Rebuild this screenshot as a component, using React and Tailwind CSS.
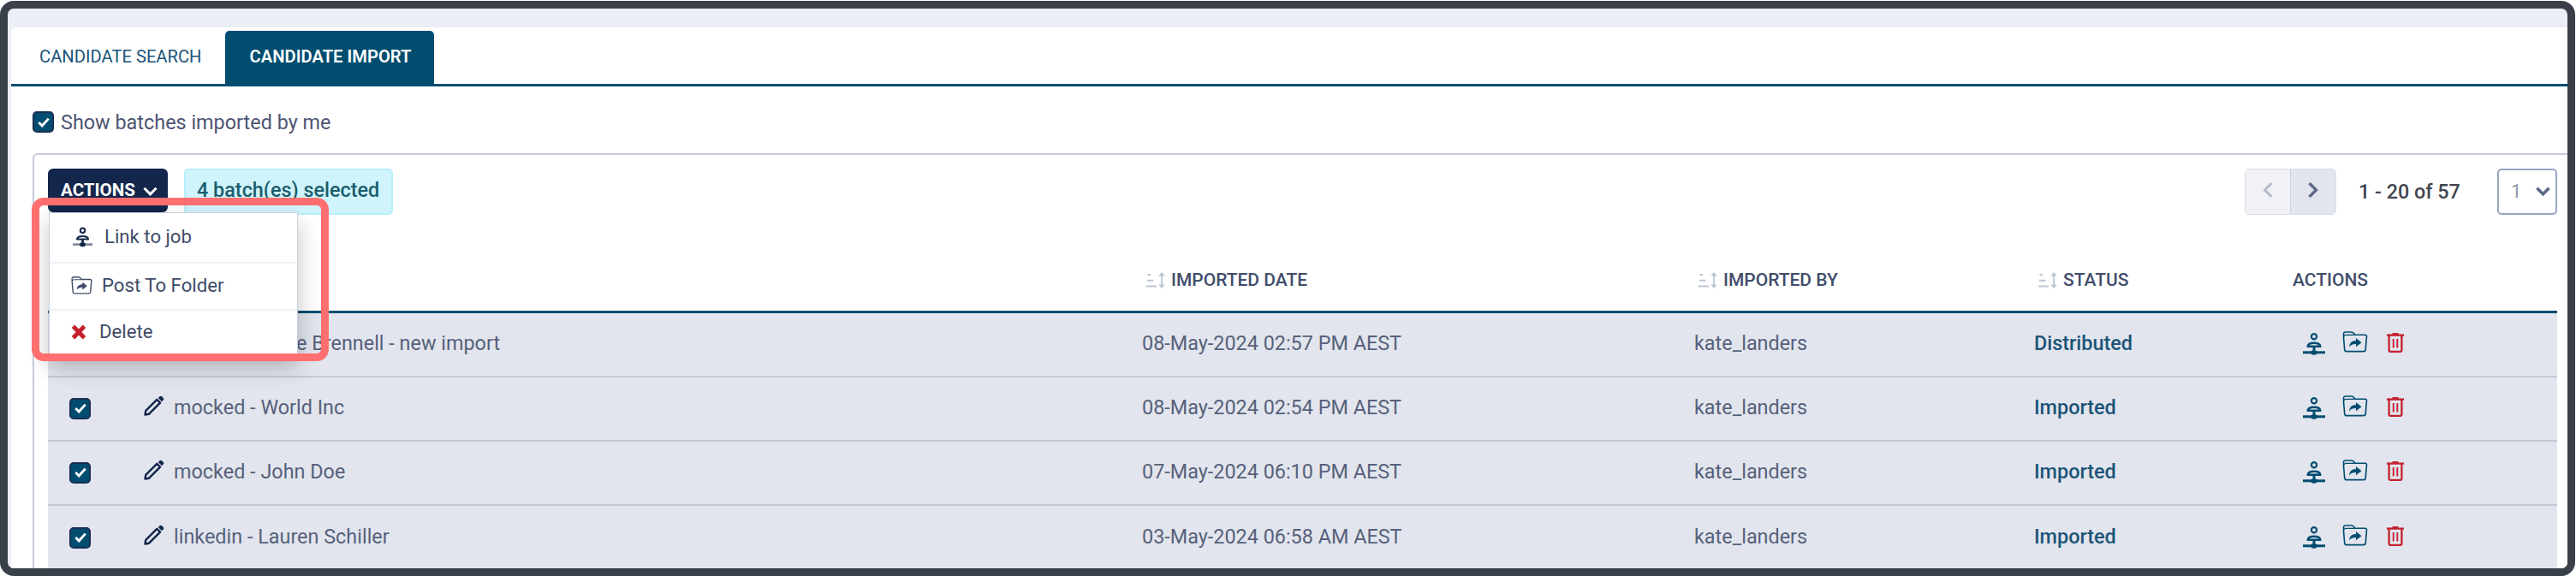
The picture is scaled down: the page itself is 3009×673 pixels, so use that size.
import clsx from "clsx";

const batches = [
  {
    name: "e Brennell - new import",
    date: "08-May-2024 02:57 PM AEST",
    user: "kate_landers",
    status: "Distributed",
    covered: true,
  },
  {
    name: "mocked - World Inc",
    date: "08-May-2024 02:54 PM AEST",
    user: "kate_landers",
    status: "Imported",
  },
  {
    name: "mocked - John Doe",
    date: "07-May-2024 06:10 PM AEST",
    user: "kate_landers",
    status: "Imported",
  },
  {
    name: "linkedin - Lauren Schiller",
    date: "03-May-2024 06:58 AM AEST",
    user: "kate_landers",
    status: "Imported",
  },
];

const columns =
  "grid grid-cols-[1278px_645px_397px_302px_minmax(0,1fr)] items-center";

/* Icons */

function LinkIcon({ className, base = "currentColor" }) {
  return (
    <svg viewBox="0 0 26 26" fill="none" className={className}>
      <circle cx="13" cy="4.2" r="3.1" stroke="currentColor" strokeWidth="2.2" />
      <path
        d="M5.6 15.8c.4-3 3-4 7.4-4s7 1 7.400 4z"
        stroke="currentColor"
        strokeWidth="2.4"
        strokeLinejoin="round"
      />
      <path d="M0 22.800h26" stroke={base} strokeWidth="3" />
      <path d="M11.500 16h3v4h-3z" fill="currentColor" />
      <ellipse cx="13" cy="22.800" rx="3.800" ry="2.900" fill="currentColor" />
    </svg>
  );
}

function FolderIcon({ className }) {
  return (
    <svg viewBox="0 0 30 26" fill="none" className={className}>
      <path
        d="M2.2 22.2 1 8V3.2C1 1.9 1.8 1 3.2 1h7.2c1.4 0 2.2.5 3 1.6l1.3 1.8H27c1.4 0 2.2.9 2 2.3l-1.3 15.6c-.1 1.5-.9 2.3-2.3 2.3H4.6c-1.4 0-2.3-.8-2.4-2.4z"
        stroke="currentColor"
        strokeWidth="1.7"
      />
      <path d="M1.2 6.2c.8-1.3 1.6-1.6 3-1.6h10.600" stroke="currentColor" strokeWidth="1.4" />
      <path
        d="M7.8 19.200c.4-5.200 3.400-7.600 8.200-7.700V8.200l6.800 5.600-6.800 5.300v-3.400c-3.600-.1-6 .9-8.200 3.500z"
        fill="currentColor"
      />
    </svg>
  );
}

function TrashIcon({ className }) {
  return (
    <svg viewBox="0 0 20 23" fill="none" className={className}>
      <path d="M6.5 1h7" stroke="currentColor" strokeWidth="2" />
      <path d="M0 2.6h20" stroke="currentColor" strokeWidth="2.4" />
      <path d="M2.6 3v17.5c0 .8.5 1.3 1.3 1.3h12.200c.8 0 1.300-.5 1.300-1.300V3" stroke="currentColor" strokeWidth="2.300" />
      <path d="M7.700 7v10.500M12.300 7v10.500" stroke="currentColor" strokeWidth="1.900" />
    </svg>
  );
}

function PencilIcon({ className }) {
  return (
    <svg viewBox="0 0 24 24" fill="none" className={className}>
      <path
        d="M1.5 22.5 2.300 17.800 15.300 4.800l3.800 3.800L6.100 21.700z"
        stroke="currentColor"
        strokeWidth="2.400"
        strokeLinejoin="round"
      />
      <path
        d="m16.800 3 1.700-1.700c.8-.8 1.800-.8 2.600 0l1.600 1.600c.8.8.8 1.800 0 2.600L21 7.200z"
        fill="currentColor"
      />
    </svg>
  );
}

function SortIcon() {
  return (
    <svg viewBox="0 0 22 19" fill="none" className="h-[19px] w-[22px] text-[#bcc5d4]">
      <path d="M1.500 3h3.500M1 9.700h7.500M0 16.500h12" stroke="currentColor" strokeWidth="2" />
      <path d="M18 2v15" stroke="currentColor" strokeWidth="1.800" />
      <path d="m18 0 3.800 4.500h-7.600zM18 19l3.800-4.500h-7.600z" fill="currentColor" />
    </svg>
  );
}

function Chevron({ className, d, width = 4 }) {
  return (
    <svg viewBox="0 0 18 18" fill="none" className={className}>
      <path d={d} stroke="currentColor" strokeWidth={width} />
    </svg>
  );
}

function Checkbox() {
  return (
    <span className="flex size-[25px] shrink-0 items-center justify-center rounded-[5px] border-2 border-[#1b2e55] bg-[#004d70]">
      <svg viewBox="0 0 14 12" fill="none" className="h-3 w-3.5">
        <path d="m1.300 6 3.900 4L12.700 1.600" stroke="white" strokeWidth="2.900" />
      </svg>
    </span>
  );
}

/* Page sections */

function Tabs() {
  return (
    <nav className="flex h-[69px] items-end border-b-[3px] border-[#004d70] text-[20.2px]">
      <button className="h-[62px] w-[250px] pb-0.5 pl-[33px] text-left text-[#1b5478]">
        CANDIDATE SEARCH
      </button>
      <button className="h-[62px] w-[244px] rounded-t-[5px] bg-[#004d70] pb-0.5 pl-0.5 font-semibold text-white">
        CANDIDATE IMPORT
      </button>
    </nav>
  );
}

function ActionsMenu() {
  const item = "flex items-center border-[#f0f1f4] pb-0.5";
  return (
    <div className="absolute top-[51px] left-px z-10 flex h-[169px] w-[291px] flex-col border border-[#c9d1df] bg-white text-[22.2px] text-[#3f4b68] shadow-[0_12px_24px_rgba(0,0,0,0.24)]">
      <div className={clsx(item, "h-[59px] border-b-2 pl-[27px]")}>
        <LinkIcon className="h-[24px] w-[23px] text-[#13264b]" base="#7f879a" />
        <span className="ml-[14px]">Link to job</span>
      </div>
      <div className={clsx(item, "h-[55px] border-b-2 pl-[25px]")}>
        <FolderIcon className="h-[21px] w-[25px] text-[#3f4b68]" />
        <span className="ml-[11px]">Post To Folder</span>
      </div>
      <div className={clsx(item, "h-[52px] pl-[25px]")}>
        <svg viewBox="0 0 18 18" className="size-[18px] text-[#c4222f]">
          <path d="m2.500 2.200 13 13.600M15.500 2.200l-13 13.600" stroke="currentColor" strokeWidth="5" />
        </svg>
        <span className="ml-[15px]">Delete</span>
      </div>
    </div>
  );
}

function Pager() {
  return (
    <div className="ml-auto flex items-center">
      <div className="flex h-[54px] w-[107px] overflow-hidden rounded-[5px] border border-[#d8dde7]">
        <button className="flex flex-1 items-center justify-center bg-[#f1f2f6]">
          <Chevron className="-mt-1 size-[18px] text-[#b3bac8]" d="M13.500 1 5.500 9l8 8" width={3} />
        </button>
        <button className="flex flex-1 items-center justify-center border-l border-[#ccd3e0] bg-[#e2e5ed]">
          <Chevron className="-mt-1 size-[18px] text-[#5b6a85]" d="m4.500 1 8 8-8 8" width={3.400} />
        </button>
      </div>
      <span className="ml-[26px] w-[162px] text-[23.3px] font-medium text-[#414550]">
        1 - 20 of 57
      </span>
      <div className="flex h-[54px] w-[70px] items-center rounded-[5px] border-2 border-[#98a5bf] pr-[6px] pb-0.5 pl-[14px] text-[22px] text-[#8b96aa]">
        1
        <Chevron className="ml-auto size-[17px] text-[#5b6a85]" d="m1.500 5 7.500 7.500L16.500 5" width={3.800} />
      </div>
    </div>
  );
}

function HeaderCell({ children }) {
  return (
    <div className="flex items-center gap-[7px] pl-[5px]">
      <SortIcon />
      <span>{children}</span>
    </div>
  );
}

function BatchRow({ batch, last }) {
  return (
    <div
      className={clsx(
        columns,
        "h-[75px] bg-[#e2e5ed] text-[23.4px] text-[#56617b]",
        !last && "border-b-2 border-[#bfc8d8]",
      )}>
      <div className="flex items-center pl-[25px]">
        <Checkbox />
        <PencilIcon className="-mt-1.5 ml-[62px] size-6 text-[#13264b]" />
        <span className={clsx("-mt-px", batch.covered ? "ml-[154px]" : "ml-[11px]")}>
          {batch.name}
        </span>
      </div>
      <div className="-mt-px">{batch.date}</div>
      <div className="-mt-px">{batch.user}</div>
      <div className="-mt-px font-medium text-[#1b5478]">{batch.status}</div>
      <div className="-mt-1.5 flex items-center pl-[12px] text-[#004d70]">
        <LinkIcon className="mt-1 h-[26px] w-[26px]" />
        <FolderIcon className="ml-5 h-[25px] w-[30px]" />
        <TrashIcon className="mt-px ml-[22px] h-[23px] w-[20px] text-[#c4222f]" />
      </div>
    </div>
  );
}

export default function App() {
  return (
    <div className="relative h-[673px] w-[3009px] overflow-hidden bg-white pt-px pr-px font-[Roboto,sans-serif]">
      <div className="h-[672px] overflow-hidden rounded-[16px] border-[9px] border-[#3a404a] bg-[#ebeef4] pt-[22px]">
        <main className="ml-1 h-[640px] rounded-tl-[5px] bg-white">
          <Tabs />

          <label className="mt-[29px] ml-[25px] flex h-[25px] items-center gap-2 text-[23.4px] text-[#4d5573]">
            <Checkbox />
            <span className="pt-0.5">Show batches imported by me</span>
          </label>

          <section className="mt-6 ml-[25px] h-[520px] rounded-tl-[6px] border-t-2 border-l-2 border-[#c6cadd] pt-4 pr-3 pl-4">
            <div className="relative flex h-[54px] items-start">
              <button className="flex h-[51px] w-[140px] items-center rounded-[6px] bg-[#13264b] pl-[15px] text-[20.6px] font-bold text-white">
                ACTIONS
                <Chevron className="mt-px ml-[9px] size-[17px]" d="m1.500 5 7.500 7.500L16.500 5" width={3.200} />
              </button>
              <div className="ml-[19px] flex h-[54px] w-[244px] items-center rounded-[5px] border-2 border-[#b6effb] bg-[#cff4fc] pb-0.5 pl-[13px] text-[23.4px] font-medium text-[#1a5e6c]">
                4 batch(es) selected
              </div>
              <Pager />
              <ActionsMenu />
            </div>

            <div>
              <div
                className={clsx(
                  columns,
                  "h-[115px] border-b-[3px] border-[#004d70] pt-[41px] text-[21px] font-medium text-[#414d6b]",
                )}>
                <div />
                <HeaderCell>IMPORTED DATE</HeaderCell>
                <HeaderCell>IMPORTED BY</HeaderCell>
                <HeaderCell>STATUS</HeaderCell>
                <div>ACTIONS</div>
              </div>
              {batches.map((batch, i) => (
                <BatchRow key={batch.date} batch={batch} last={i === batches.length - 1} />
              ))}
            </div>
          </section>
        </main>
      </div>

      {/* Callout around the open menu */}
      <div className="pointer-events-none absolute top-[231px] left-[37px] z-20 h-[191px] w-[347px] rounded-[14px] border-[9px] border-[#ff6f6f]" />
    </div>
  );
}
